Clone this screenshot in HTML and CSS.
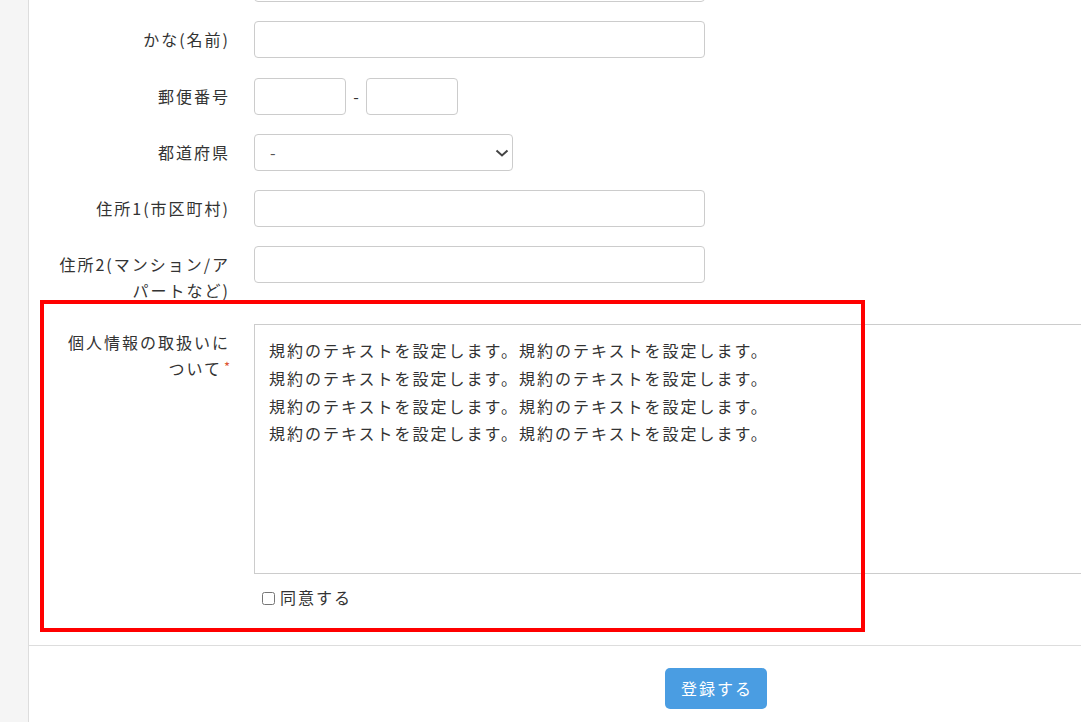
FILE: index.html
```html
<!DOCTYPE html>
<html lang="ja">
<head>
  <meta charset="UTF-8" />
  <meta name="viewport" content="width=device-width, initial-scale=1.0" />
  <title>会員登録</title>
  <link rel="stylesheet" href="styles.css">
</head>
<body>
  <div class="page">
    <aside class="sidebar"></aside>

    <main class="content">
      <form class="entry-form">
        <div class="fields">
          <!-- スクロールで上に隠れている行 -->
          <div class="form-row">
            <label class="form-label"></label>
            <div class="form-field"><input type="text" class="input input-wide" /></div>
          </div>

          <div class="form-row">
            <label class="form-label">かな(名前)</label>
            <div class="form-field"><input type="text" class="input input-wide" /></div>
          </div>

          <div class="form-row">
            <label class="form-label">郵便番号</label>
            <div class="form-field zip">
              <input type="text" class="input input-zip" />
              <span class="zip-dash">-</span>
              <input type="text" class="input input-zip" />
            </div>
          </div>

          <div class="form-row">
            <label class="form-label">都道府県</label>
            <div class="form-field">
              <span class="select-wrap">
                <select class="select">
                  <option>-</option>
                  <option>北海道</option>
                  <option>東京都</option>
                </select>
                <svg class="select-arrow" width="14" height="8" viewBox="0 0 14 8">
                  <path d="M1.5 1.5 L7 6.5 L12.5 1.5" fill="none" stroke="#444" stroke-width="2" />
                </svg>
              </span>
            </div>
          </div>

          <div class="form-row">
            <label class="form-label">住所1(市区町村)</label>
            <div class="form-field"><input type="text" class="input input-wide" /></div>
          </div>

          <div class="form-row">
            <label class="form-label">住所2(マンション/アパートなど)</label>
            <div class="form-field"><input type="text" class="input input-wide" /></div>
          </div>

          <!-- 個人情報の取扱い -->
          <div class="form-row form-row-privacy">
            <div class="highlight"></div>
            <div class="form-label">個人情報の取扱いについて<span class="required">*</span></div>
            <div class="form-field">
              <textarea class="terms" readonly>規約のテキストを設定します。規約のテキストを設定します。
規約のテキストを設定します。規約のテキストを設定します。
規約のテキストを設定します。規約のテキストを設定します。
規約のテキストを設定します。規約のテキストを設定します。</textarea>
              <label class="agree"><input type="checkbox" class="agree-check" />同意する</label>
            </div>
          </div>
        </div>

        <div class="form-actions">
          <button type="submit" class="btn-submit">登録する</button>
        </div>
      </form>
    </main>
  </div>
</body>
</html>
```

FILE: styles.css
```css
html, body {
  margin: 0;
  padding: 0;
  width: 100%;
  height: 100%;
  overflow: hidden;
  background: #fff;
  color: #333;
  font-family: "Noto Sans CJK JP", "Noto Sans", sans-serif;
  font-size: 16px;
}

.page {
  display: flex;
  min-height: 100%;
}

.sidebar {
  flex: 0 0 28px;
  background: #f5f5f5;
  border-right: 1px solid #ddd;
}

.content {
  flex: 1;
  min-width: 0;
}

/* ページは少しスクロールした状態 */
.entry-form {
  margin-top: -35px;
}

.fields {
  padding-bottom: 34px;
  border-bottom: 1px solid #ddd;
}

.form-row {
  display: grid;
  grid-template-columns: 172px 1fr;
  column-gap: 24px;
  align-items: start;
  padding-left: 29px;
  margin-bottom: 19.3px;
}

.form-label {
  padding-top: 6px;
  text-align: right;
  line-height: 1.6;
  letter-spacing: 2px;
}

.form-field {
  min-width: 0;
}

.input {
  box-sizing: border-box;
  height: 37px;
  padding: 6px 12px;
  border: 1px solid #ccc;
  border-radius: 4px;
  font: inherit;
  color: #333;
  background: #fff;
  outline: none;
}

.input-wide {
  width: 451px;
}

.zip {
  display: flex;
  align-items: center;
  gap: 7px;
}

.input-zip {
  width: 92px;
}

.zip-dash {
  width: 6px;
  text-align: center;
  color: #333;
}

.select-wrap {
  position: relative;
  display: inline-block;
}

.select {
  box-sizing: border-box;
  width: 259px;
  height: 37px;
  padding: 0 12px 0 15px;
  border: 1px solid #ccc;
  border-radius: 4px;
  background: #fff;
  font: inherit;
  color: #555;
  appearance: none;
  -webkit-appearance: none;
  outline: none;
}

.select-arrow {
  position: absolute;
  top: 15px;
  right: 4px;
  pointer-events: none;
}

.form-row-privacy {
  position: relative;
  margin-top: 20.5px;
  margin-bottom: 0;
}

.highlight {
  position: absolute;
  top: -24px;
  left: 11px;
  width: 825px;
  height: 332px;
  box-sizing: border-box;
  border: 4px solid #f00;
  pointer-events: none;
}

.required {
  color: #dd5533;
  font-size: 13px;
  letter-spacing: 0;
  margin-left: 2px;
  vertical-align: 3px;
}

.terms {
  display: block;
  box-sizing: border-box;
  width: 900px;
  height: 250px;
  padding: 12px 14px;
  border: 1px solid #ccc;
  border-radius: 0;
  font: inherit;
  color: #333;
  line-height: 1.73;
  letter-spacing: 2px;
  resize: none;
  outline: none;
  overflow: hidden;
}

.agree {
  display: flex;
  align-items: center;
  margin-top: 11px;
  line-height: 1.6;
  letter-spacing: 2px;
}

.agree-check {
  width: 13px;
  height: 13px;
  margin: 1px 5px 0 8px;
}

.form-actions {
  padding: 22px 0 20px 636px;
}

.btn-submit {
  height: 41px;
  padding: 0 14px 0 16px;
  border: none;
  border-radius: 5px;
  background: #4a9de2;
  color: #fff;
  font: inherit;
  letter-spacing: 2px;
  cursor: pointer;
}
```
